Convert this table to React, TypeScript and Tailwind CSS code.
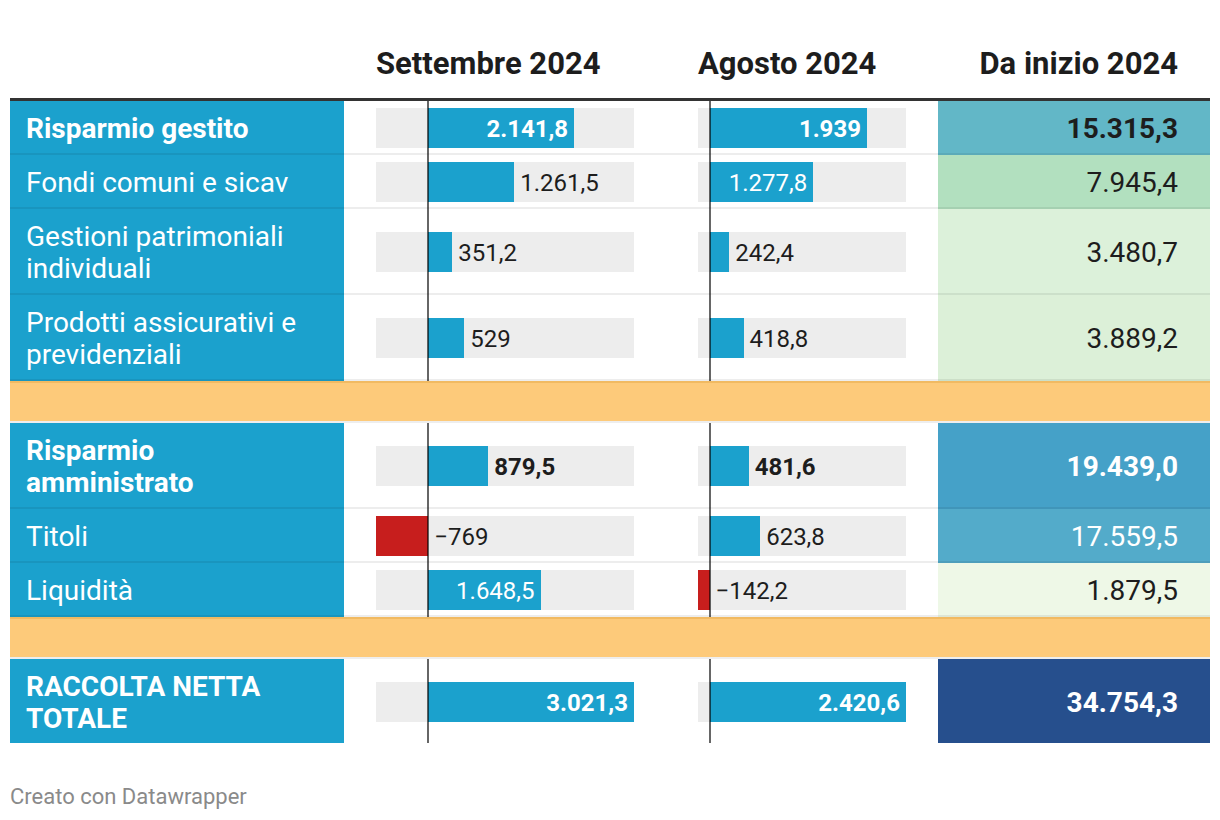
import React from 'react';

type Row = {
  kind: 'data';
  label: string;
  bold?: boolean;
  sep: number;
  sepText: string;
  sepIn?: boolean;
  ago: number;
  agoText: string;
  agoIn?: boolean;
  ytd: string;
  ytdCls: string;
  last?: boolean;
} | { kind: 'spacer' };

const rows: Row[] = [
  { kind: 'data', label: 'Risparmio gestito', bold: true, sep: 2141.8, sepText: '2.141,8', sepIn: true, ago: 1939, agoText: '1.939', agoIn: true, ytd: '15.315,3', ytdCls: 'bg-[#62b7c7] text-[#1d1d1d] font-bold' },
  { kind: 'data', label: 'Fondi comuni e sicav', sep: 1261.5, sepText: '1.261,5', ago: 1277.8, agoText: '1.277,8', agoIn: true, ytd: '7.945,4', ytdCls: 'bg-[#b2e0bf] text-[#1d1d1d]' },
  { kind: 'data', label: 'Gestioni patrimoniali individuali', sep: 351.2, sepText: '351,2', ago: 242.4, agoText: '242,4', ytd: '3.480,7', ytdCls: 'bg-[#dcf1da] text-[#1d1d1d]' },
  { kind: 'data', label: 'Prodotti assicurativi e previdenziali', sep: 529, sepText: '529', ago: 418.8, agoText: '418,8', ytd: '3.889,2', ytdCls: 'bg-[#dcf0d8] text-[#1d1d1d]' },
  { kind: 'spacer' },
  { kind: 'data', label: 'Risparmio amministrato', bold: true, sep: 879.5, sepText: '879,5', ago: 481.6, agoText: '481,6', ytd: '19.439,0', ytdCls: 'bg-[#45a1c8] text-white font-bold' },
  { kind: 'data', label: 'Titoli', sep: -769, sepText: '−769', ago: 623.8, agoText: '623,8', ytd: '17.559,5', ytdCls: 'bg-[#53abca] text-white' },
  { kind: 'data', label: 'Liquidità', sep: 1648.5, sepText: '1.648,5', sepIn: true, ago: -142.2, agoText: '−142,2', ytd: '1.879,5', ytdCls: 'bg-[#eef8e7] text-[#1d1d1d]' },
  { kind: 'spacer' },
  { kind: 'data', label: 'RACCOLTA NETTA TOTALE', bold: true, sep: 3021.3, sepText: '3.021,3', sepIn: true, ago: 2420.6, agoText: '2.420,6', agoIn: true, ytd: '34.754,3', ytdCls: 'bg-[#264f8d] text-white font-bold', last: true },
];

// bar scales: domain [min, max] mapped on the grey box
const SEP = { width: 258, min: -769, max: 3021.3 };
const AGO = { width: 208, min: -142.2, max: 2420.6 };

const Bar: React.FC<{
  value: number;
  text: string;
  inside?: boolean;
  bold?: boolean;
  scale: { width: number; min: number; max: number };
}> = ({ value, text, inside, bold, scale }) => {
  const k = scale.width / (scale.max - scale.min);
  const zero = -scale.min * k;
  const w = Math.abs(value) * k;
  const neg = value < 0;
  const barLeft = neg ? zero - w : zero;
  const barEnd = zero + w;

  let labelStyle: React.CSSProperties;
  let labelCls = bold ? 'font-bold' : '';
  if (neg) {
    labelStyle = { left: zero + 6 };
    labelCls += ' text-[#1d1d1d]';
  } else if (inside) {
    labelStyle = { right: scale.width - barEnd + 6 };
    labelCls += ' text-white';
  } else {
    labelStyle = { left: barEnd + 6 };
    labelCls += ' text-[#1d1d1d]';
  }

  return (
    <div className="relative h-[40px] bg-[#ededed]" style={{ width: scale.width }}>
      <div
        className={neg ? 'absolute top-0 h-full bg-[#c71e1d]' : 'absolute top-0 h-full bg-[#1ba1cd]'}
        style={{ left: barLeft, width: w }}
      />
      <span className={`absolute top-[1px] text-[24px] leading-[40px] whitespace-nowrap ${labelCls}`} style={labelStyle}>
        {text}
      </span>
    </div>
  );
};

const App: React.FC = () => {
  return (
    <div className="w-[1220px] h-[820px] bg-white px-[10px] font-['Roboto',sans-serif] text-[#1d1d1d]">
      {/* intestazione */}
      <div className="flex items-end h-[101px] pb-[18px] border-b-[3px] border-[#333333] text-[31px] leading-[32px] font-bold">
        <div className="w-[334px]" />
        <div className="w-[322px] pl-[32px] whitespace-nowrap">Settembre 2024</div>
        <div className="w-[272px] pl-[32px] whitespace-nowrap">Agosto 2024</div>
        <div className="w-[272px] pr-[32px] text-right whitespace-nowrap">Da inizio 2024</div>
      </div>

      {rows.map((r, i) => {
        if (r.kind === 'spacer') {
          return (
            <div key={i} className="h-[42px] border-t-2 border-[#f1ba62] bg-[#fdca7a] border-b-2 border-b-[#eeeeee]" />
          );
        }
        const border = r.last ? '' : 'border-b-2 border-black/[0.07]';
        return (
          <div key={i} className="flex">
            <div className={`w-[334px] bg-[#1ba1cd] text-white text-[28px] leading-[32px] pt-[12px] pb-[8px] pl-[16px] pr-[32px] ${r.bold ? 'font-bold' : ''} ${border}`}>
              {r.label}
            </div>
            <div className={`relative w-[322px] flex items-center pl-[32px] pt-[1px] ${border}`}>
              <Bar value={r.sep} text={r.sepText} inside={r.sepIn} bold={r.bold} scale={SEP} />
              <div className={`absolute left-[83px] top-0 w-[2px] bg-black/60 ${r.last ? 'bottom-0' : '-bottom-[2px]'}`} />
            </div>
            <div className={`relative w-[272px] flex items-center pl-[32px] pt-[1px] ${border}`}>
              <Bar value={r.ago} text={r.agoText} inside={r.agoIn} bold={r.bold} scale={AGO} />
              <div className={`absolute left-[43px] top-0 w-[2px] bg-black/60 ${r.last ? 'bottom-0' : '-bottom-[2px]'}`} />
            </div>
            <div className={`w-[272px] flex items-center justify-end pr-[32px] pt-[3px] text-[28px] ${r.ytdCls} ${border}`}>
              {r.ytd}
            </div>
          </div>
        );
      })}

      <div className="mt-[41px] text-[22px] leading-[26px] text-[#8a8a8a]">Creato con Datawrapper</div>
    </div>
  );
};

export default App;
